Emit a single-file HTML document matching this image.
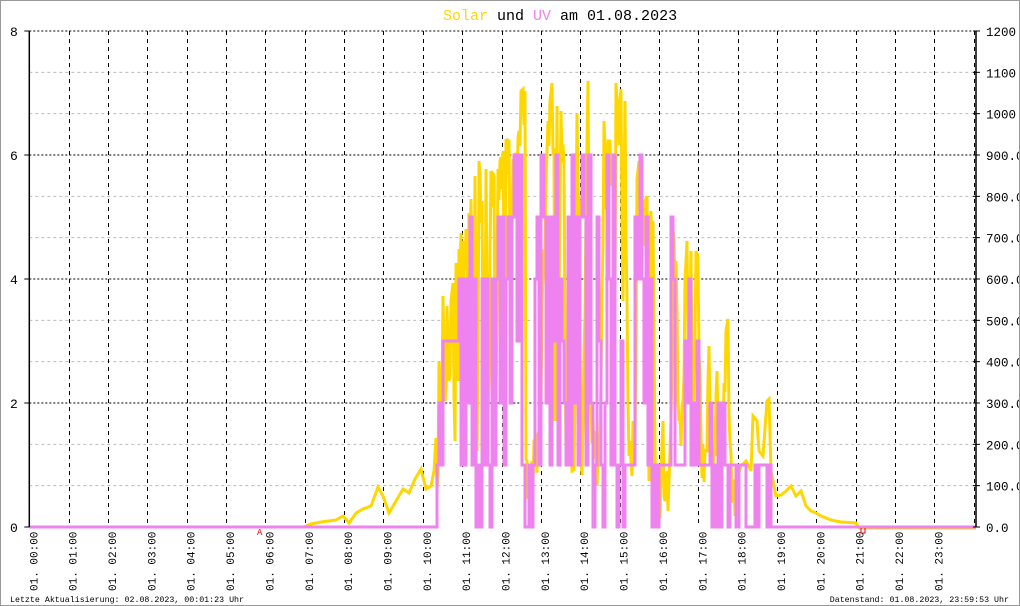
<!DOCTYPE html>
<html><head><meta charset="utf-8"><style>
html,body{margin:0;padding:0;background:#fff}
#c{position:relative;width:1020px;height:606px;overflow:hidden;background:#fff;box-sizing:border-box;border:1px solid #999}
svg{position:absolute;left:0;top:0}
text{font-family:"Liberation Mono","DejaVu Sans Mono",monospace}
</style></head><body><div id="c">
<svg id="s" width="1020" height="606" xmlns="http://www.w3.org/2000/svg">
<text x="442" y="19" font-size="15"><tspan fill="#FFD700">Solar</tspan><tspan fill="#000"> und </tspan><tspan fill="#EE82EE">UV</tspan><tspan fill="#000"> am 01.08.2023</tspan></text>
<g id="grid"></g>
<g id="data"></g>
<g id="ax"></g>
<text x="9" y="601" font-size="8.3" fill="#000">Letzte Aktualisierung: 02.08.2023, 00:01:23 Uhr</text>
<text x="1008" y="601" font-size="8.3" fill="#000" text-anchor="end">Datenstand: 01.08.2023, 23:59:53 Uhr</text>
<text x="256" y="534" font-size="9" fill="#e00">A</text>
<path d="M860 527 v5 h4 v-5" stroke="#e00" fill="none" stroke-width="1"/>
</svg></div>
<script>
var NS="http://www.w3.org/2000/svg";
function el(p,t,a,txt){var e=document.createElementNS(NS,t);for(var k in a)e.setAttribute(k,a[k]);if(txt!=null)e.textContent=txt;document.getElementById(p).appendChild(e);return e;}
var L=28.3,R=975,T=30,B=526,H=39.35;
for(var i=1;i<12;i++){var y=B-i*496/12;if(i%3==0)continue;el('grid','line',{x1:L,x2:R,y1:y,y2:y,stroke:'#bbb','stroke-dasharray':'3,3'});}
for(var i=3;i<=12;i+=3){var y=B-i*496/12;el('grid','line',{x1:L,x2:R,y1:y,y2:y,stroke:'#000','stroke-dasharray':'2,2'});}
for(var h=1;h<=24;h++){var x=Math.round(L+h*H)+0.5;el('grid','line',{x1:x,x2:x,y1:T,y2:B,stroke:'#000','stroke-dasharray':'4,4'});}
el('ax','line',{x1:L,x2:L,y1:T,y2:B,stroke:'#000','stroke-width':1.5});
el('ax','line',{x1:R,x2:R,y1:T,y2:B,stroke:'#000','stroke-width':1.5});
for(var k=0;k<=8;k+=2){var y=B-k*62;el('ax','line',{x1:L-5,x2:L,y1:y,y2:y,stroke:'#000'});el('ax','text',{x:9,y:y+5,'font-size':13,fill:'#000'},''+k);}
var rl=['0.0','100.0','200.0','300.0','400.0','500.0','600.0','700.0','800.0','900.0','1000','1100','1200'];
for(var i=0;i<=12;i++){var y=B-i*496/12;el('ax','line',{x1:R-3,x2:R+4,y1:y,y2:y,stroke:'#000'});el('ax','text',{x:985,y:y+5,'font-size':12.5,fill:'#000'},rl[i]);}
for(var h=0;h<24;h++){var x=L+h*H+8;var hh=(h<10?'0':'')+h;el('ax','text',{x:0,y:0,'font-size':11,fill:'#000',transform:'translate('+x+',590) rotate(-90)'},'01. '+hh+':00');}
var yp=[[28,526],[303,526],[310,523],[320,521],[335,519],[342,515],[348,522],[355,512],[362,508],[370,505],[377,486],[382,495],[388,512],[395,500],[402,488],[408,492],[414,478],[420,468],[425,488],[430,485],[433,470],[435,437],[437,470],[438,360],[440,420],[442,295],[444,400],[446,305],[448,380],[450,300],[452,282],[454,440],[455,262],[457,380],[458,248],[460,232],[462,460],[463,240],[465,228],[467,300],[468,212],[470,198],[472,420],[474,175],[476,450],[478,160],[481,200],[483,458],[485,168],[487,420],[490,170],[493,174],[495,420],[497,168],[500,156],[502,150],[504,380],[505,138],[508,140],[510,300],[512,158],[515,152],[518,130],[520,90],[522,88],[524,90],[525,458],[530,470],[533,440],[535,440],[538,430],[540,410],[541,300],[543,250],[545,180],[547,120],[549,100],[551,82],[553,150],[554,420],[556,105],[558,300],[560,110],[563,160],[565,450],[568,380],[570,420],[573,470],[576,112],[578,200],[580,458],[582,420],[585,210],[587,80],[590,400],[594,430],[597,460],[600,380],[603,120],[606,200],[607,140],[609,140],[612,170],[614,300],[615,82],[617,120],[620,88],[622,300],[624,100],[627,400],[630,460],[632,420],[634,440],[636,178],[638,160],[640,210],[642,220],[644,200],[646,195],[648,480],[650,210],[652,220],[654,450],[656,480],[658,495],[660,470],[662,420],[664,500],[666,470],[668,480],[670,420],[672,228],[675,260],[678,420],[682,400],[684,280],[686,240],[688,370],[690,250],[692,420],[695,250],[697,255],[700,440],[705,450],[708,345],[712,470],[716,370],[720,460],[725,330],[727,318],[729,440],[732,480],[735,480],[740,465],[745,460],[750,470],[752,415],[756,420],[758,450],[762,455],[766,400],[768,398],[770,470],[775,495],[780,494],[785,490],[790,485],[795,495],[800,490],[805,505],[810,510],[815,512],[820,515],[830,519],[840,521],[855,522],[858,527],[975,527]];
var pts='',alt=0;
for(var i=0;i<yp.length;i++){
  var x0=yp[i][0],y0=yp[i][1];pts+=x0+','+y0+' ';
  if(i+1<yp.length&&x0>=434&&x0<735){var x1=yp[i+1][0],y1=yp[i+1][1];
    for(var x=x0+1;x<x1;x+=1){var t=(x-x0)/(x1-x0);var y=y0+(y1-y0)*t;alt^=1;if(alt)y=Math.min(B,y+35);pts+=x+','+y.toFixed(1)+' ';}}
}
el('data','polyline',{points:pts,fill:'none',stroke:'#FFD700','stroke-width':3,'stroke-linejoin':'miter'});
var st=[[28,0],[435,0],[436,1],[438,2],[440,1],[442,3],[458,4],[460,1],[461,4],[463,1],[465,4],[467,2],[469,5],[471,1],[473,4],[475,0],[477,1],[479,0],[481,4],[483,1],[485,4],[487,1],[489,0],[491,4],[493,1],[495,4],[497,5],[499,2],[501,5],[503,1],[505,4],[507,5],[509,2],[511,5],[513,6],[516,3],[518,6],[521,1],[524,0],[528,1],[530,0],[532,1],[534,4],[536,5],[538,1],[540,6],[543,5],[545,2],[547,5],[549,1],[551,5],[553,3],[555,6],[557,1],[559,4],[561,3],[563,2],[565,1],[567,5],[569,1],[571,6],[573,2],[575,5],[577,1],[579,5],[581,6],[583,5],[585,1],[587,6],[590,2],[592,0],[594,1],[596,5],[598,3],[600,1],[602,0],[604,2],[606,6],[608,4],[610,1],[612,6],[614,1],[616,0],[618,1],[620,3],[622,0],[624,1],[634,5],[636,4],[639,6],[641,4],[643,2],[645,5],[647,1],[649,4],[651,0],[654,1],[656,0],[658,1],[670,5],[672,4],[674,1],[684,3],[686,2],[688,4],[690,1],[692,2],[694,1],[696,3],[698,1],[709,2],[711,0],[713,1],[715,0],[717,2],[719,0],[721,1],[722,2],[724,1],[727,0],[729,1],[735,0],[738,1],[745,0],[754,1],[756,0],[758,1],[764,1],[766,0],[768,1],[770,0],[975,0]];
var d='M'+st[0][0]+','+(B-st[0][1]*62);
for(var i=1;i<st.length;i++){d+=' H'+st[i][0]+' V'+(B-st[i][1]*62);}
el('data','path',{d:d,fill:'none',stroke:'#EE82EE','stroke-width':3});
</script>
</body></html>
